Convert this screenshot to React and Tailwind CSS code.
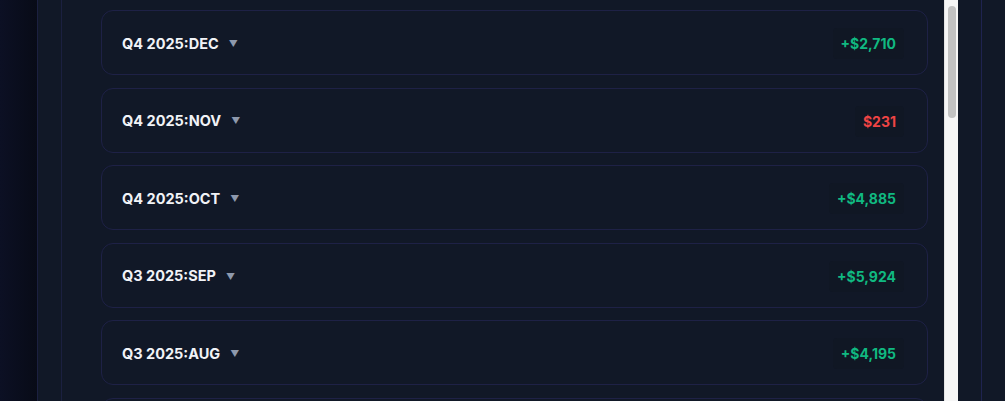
const months = [
  { label: 'Q4 2025:DEC', amount: '+$2,710', positive: true },
  { label: 'Q4 2025:NOV', amount: '$231', positive: false },
  { label: 'Q4 2025:OCT', amount: '+$4,885', positive: true },
  { label: 'Q3 2025:SEP', amount: '+$5,924', positive: true },
  { label: 'Q3 2025:AUG', amount: '+$4,195', positive: true },
];

function MonthRow({ label, amount, positive }) {
  return (
    <div className="h-[65px] shrink-0 flex items-center justify-between pl-5 pr-[23px] pt-[2px] rounded-xl border border-[#1e2146] bg-[#111827]">
      <div className="flex items-center gap-[10px]">
        <span className="text-[14.5px] font-bold text-[#f1f3f7]">{label}</span>
        <span className="text-[9px] text-[#8e99ad]">▼</span>
      </div>
      <div
        className={
          'px-[8px] py-[5px] rounded bg-[#101724] text-[14px] font-bold ' +
          (positive ? 'text-[#10b981]' : 'text-[#ef4444]')
        }
      >
        {amount}
      </div>
    </div>
  );
}

export default function App() {
  return (
    <div
      className="w-[1005px] h-[401px] flex overflow-hidden bg-[#111827]"
      style={{ fontFamily: 'Inter, "Noto Sans", sans-serif' }}
    >
      {/* left backdrop */}
      <div className="w-[37px] shrink-0 bg-gradient-to-r from-[#0c1024] to-[#080b17]" />

      {/* outer panel */}
      <div className="w-[24px] shrink-0 border-l border-[#1b2040] bg-[#111827]" />

      {/* scroll area */}
      <div className="flex-1 flex border-l border-[#1b2040] bg-[#111827]">
        <div className="flex-1 flex flex-col gap-[12.6px] pt-[10px] pl-[39px] pr-[16px]">
          {months.map(m => (
            <MonthRow key={m.label} {...m} />
          ))}
          {/* next row, scrolled out of view */}
          <div className="h-[65px] shrink-0 rounded-xl border border-[#1e2146] bg-[#111827]" />
        </div>

        {/* scrollbar */}
        <div className="w-[14px] shrink-0 bg-[#f6f6f6] border-l border-[#e4e4e4] pt-[6px] flex justify-center">
          <div className="w-[8px] h-[112px] rounded-full bg-[#c2c2c2]" />
        </div>
      </div>

      {/* right margin */}
      <div className="w-[47px] shrink-0 flex bg-[#111827]">
        <div className="w-[23px]" />
        <div className="flex-1 border-l border-[#1f2350]" />
      </div>
    </div>
  );
}
